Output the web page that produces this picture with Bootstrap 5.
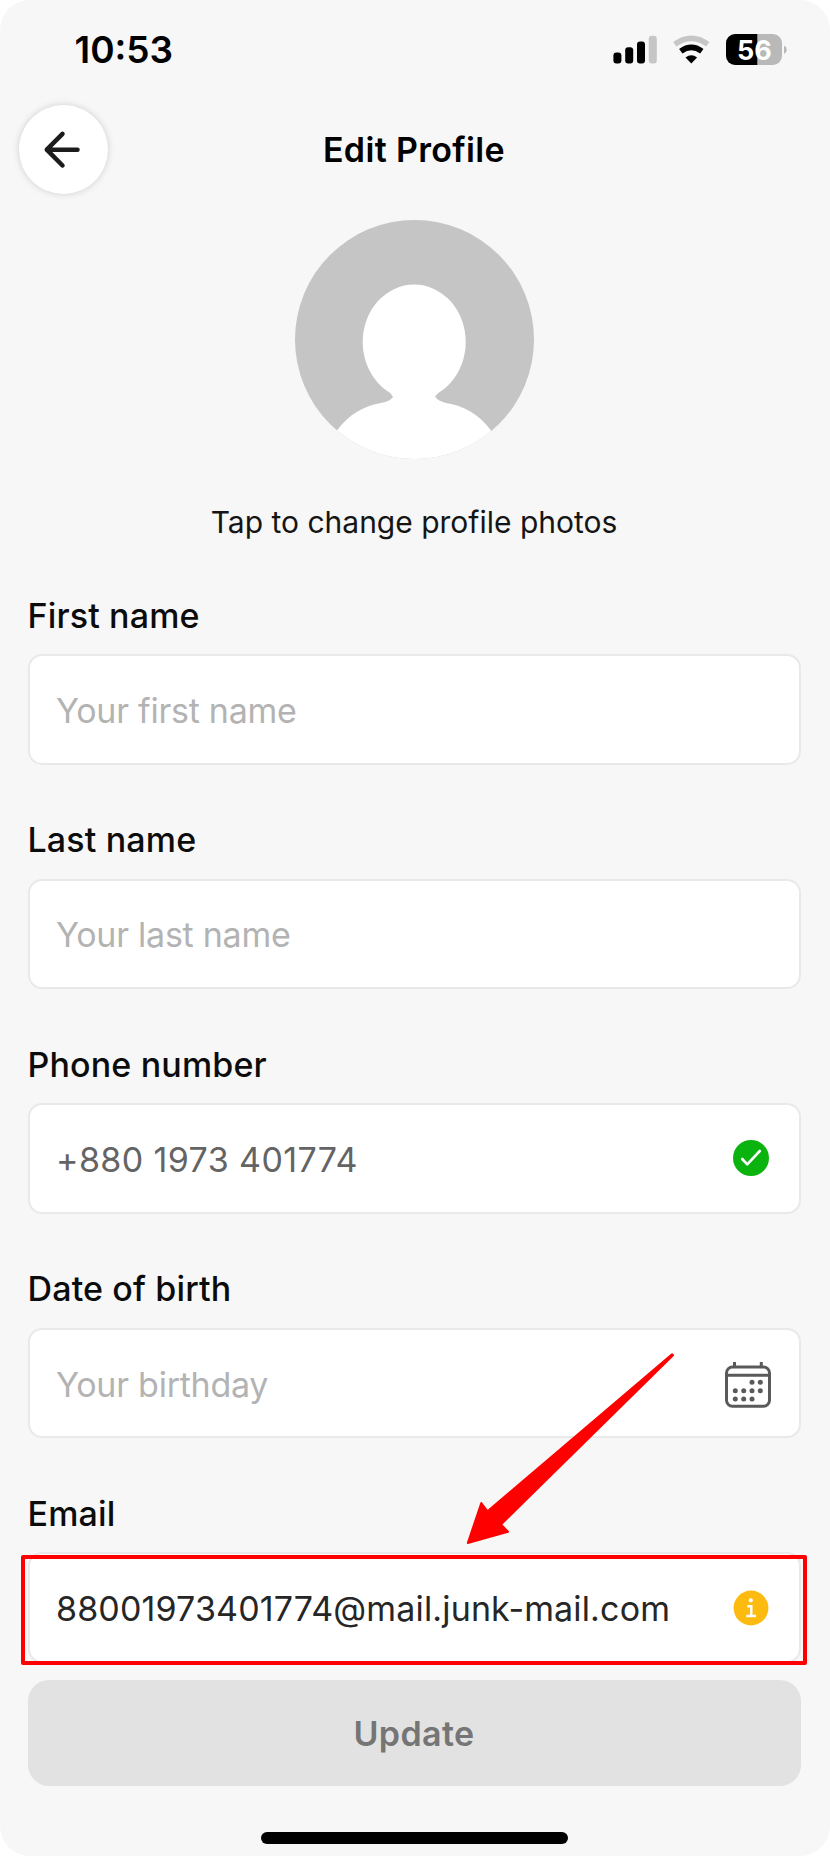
<!DOCTYPE html>
<html lang="en">
<head>
<meta charset="utf-8">
<meta name="viewport" content="width=device-width, initial-scale=1">
<title>Edit Profile</title>
<link href="https://cdn.jsdelivr.net/npm/bootstrap@5.3.0/dist/css/bootstrap.min.css" rel="stylesheet">
<style>
body{background:#fff;font-family:Inter,"Liberation Sans",sans-serif;color:#0c0c0c}
.screen{width:830px;height:1856px;background:#f7f7f7;border-radius:30px;padding:0 29.5px 0 27.5px}
.status{height:100px;padding:0 10.5px 0 47px}
.clock{font-size:37px;font-weight:600;line-height:40px;color:#000}
.topbar{height:99px}
.back{width:89px;height:89px;left:-9px;top:5px;border:0;padding:0;background:#fff;box-shadow:0 0 7px rgba(0,0,0,.17)}
.title{font-size:34px;font-weight:600;line-height:40px;letter-spacing:.35px;color:#000}
.avatar{margin-top:20.5px}
.caption{font-size:30px;line-height:40px;margin-top:43px;color:#151515}
.fields{margin-top:54px;gap:55.6px}
.field-label{font-size:34px;font-weight:500;line-height:40px;letter-spacing:.15px;margin-bottom:18.5px}
.box{height:110.5px;border:2.5px solid #e9e9e9;border-radius:14px;background:#fff;padding:0 30px 0 26.5px}
.box input{font-size:34px;line-height:44px;height:46px;border:0;background:none;outline:0;padding:2px 0 0;min-width:0;letter-spacing:.4px;color:#646464}
.box input::placeholder{color:#b3b3b3;opacity:1;letter-spacing:-.25px}
.box input.filled{color:#262626;letter-spacing:.15px}
.calendar{margin:4px -2.7px 0 0}
.update{height:105.5px;margin-top:17.6px;border-radius:21px;border:0;background:#e2e2e2;font-size:34px;font-weight:600;letter-spacing:.4px}
.update:disabled{background:#e2e2e2;color:#757575;opacity:1}
.homebar{width:307px;height:12px;border-radius:6px;background:#000;margin-top:46px}
.highlight{left:-6.5px;top:61px;width:786px;height:110px;border:4px solid #f00;border-radius:2px}
.pointer{left:432.5px;top:-149px}
</style>
</head>
<body>
<main class="screen d-flex flex-column">
  <div class="status d-flex align-items-center justify-content-between">
    <span class="clock">10:53</span>
    <svg width="180" height="40" viewBox="0 0 180 40" role="img" aria-label="Signal, Wi-Fi, battery">
      <rect x="3.400" y="22.500" width="8" height="11" rx="3"/>
      <rect x="15.200" y="17.300" width="8" height="16.200" rx="3"/>
      <rect x="27" y="11.500" width="8" height="22" rx="3"/>
      <rect x="38.800" y="5.700" width="8" height="27.800" rx="3" fill="#c6c6c6"/>
      <path d="M64.800 14.300Q81.300 2.500 97.800 14.300" fill="none" stroke="#c6c6c6" stroke-width="5.500"/>
      <path d="M70.800 21.300Q81.300 13.600 91.800 21.300" fill="none" stroke="#000" stroke-width="5.700"/>
      <path d="M75.500 27.500Q81.300 23 87.100 27.500L81.300 33.500Z"/>
      <path d="M125 4H147.700V35H125A9 9 0 0 1 116 26V13A9 9 0 0 1 125 4Z"/>
      <path d="M147.500 4H163A9 9 0 0 1 172 13V26A9 9 0 0 1 163 35H147.500Z" fill="#b9b9b9"/>
      <path d="M174 15.500Q176.800 17 176.800 19.700T174 24Z" fill="#b9b9b9"/>
      <text x="144.300" y="29.700" text-anchor="middle" font-size="27" font-weight="700" fill="#fff">56</text>
    </svg>
  </div>
  <header class="topbar position-relative d-flex align-items-center justify-content-center">
    <button class="back position-absolute rounded-circle" aria-label="Back">
      <svg class="d-block" width="89" height="89" viewBox="0 0 89 89" fill="none" stroke="#1c1c1c" stroke-width="4.500" stroke-linecap="round" stroke-linejoin="round"><path d="M43.500 28.800L27.800 44.700L43.500 60.500M27.800 44.700H58.500"/></svg>
    </button>
    <h1 class="title m-0">Edit Profile</h1>
  </header>
  <svg class="avatar mx-auto flex-shrink-0" width="239" height="239" viewBox="0 0 239 239" role="img" aria-label="Profile photo">
    <defs><clipPath id="disc"><circle cx="119.500" cy="119.500" r="119.500"/></clipPath></defs>
    <g clip-path="url(#disc)">
      <rect width="239" height="239" fill="#c5c5c5"/>
      <ellipse cx="119.200" cy="122" rx="51.500" ry="57.500" fill="#fff"/>
      <path d="M94 171L98 177Q95 181.500 86 183C69 186 54 194 42 210.500V239H196V210.500C184 194 168 185.500 151 183Q143 181 140 176.500L145 171Z" fill="#fff"/>
    </g>
  </svg>
  <p class="caption text-center mb-0">Tap to change profile photos</p>
  <form class="fields d-flex flex-column">
    <div>
      <label class="field-label d-block" for="first">First name</label>
      <div class="box d-flex align-items-center"><input class="flex-grow-1" id="first" placeholder="Your first name"></div>
    </div>
    <div>
      <label class="field-label d-block" for="last">Last name</label>
      <div class="box d-flex align-items-center"><input class="flex-grow-1" id="last" placeholder="Your last name"></div>
    </div>
    <div>
      <label class="field-label d-block" for="phone">Phone number</label>
      <div class="box d-flex align-items-center">
        <input class="flex-grow-1" id="phone" value="+880 1973 401774">
        <svg width="36" height="36" viewBox="0 0 36 36"><circle cx="18" cy="18" r="18" fill="#0bb30f"/><path d="M9.200 19L14.200 24.400L26.800 11" fill="none" stroke="#fff" stroke-width="2.600" stroke-linecap="round" stroke-linejoin="round"/></svg>
      </div>
    </div>
    <div>
      <label class="field-label d-block" for="birth">Date of birth</label>
      <div class="box d-flex align-items-center">
        <input class="flex-grow-1" id="birth" placeholder="Your birthday">
        <svg class="calendar" width="46" height="46" viewBox="0 0 46 46" fill="none" stroke="#5a5a5a" stroke-width="3">
          <rect x="1.500" y="5" width="43" height="39.200" rx="6"/><path d="M2 13.300H44M9.500 0V5M36.300 0V5"/>
          <g fill="#5a5a5a" stroke="none"><circle cx="27" cy="20.300" r="2.500"/><circle cx="35.300" cy="20.300" r="2.500"/><circle cx="10.300" cy="28.700" r="2.500"/><circle cx="18.700" cy="28.700" r="2.500"/><circle cx="27" cy="28.700" r="2.500"/><circle cx="35.300" cy="28.700" r="2.500"/><circle cx="10.300" cy="37" r="2.500"/><circle cx="18.700" cy="37" r="2.500"/><circle cx="27" cy="37" r="2.500"/></g>
        </svg>
      </div>
    </div>
    <div class="position-relative">
      <label class="field-label d-block" for="email">Email</label>
      <div class="box d-flex align-items-center">
        <input class="filled flex-grow-1" id="email" value="88001973401774@mail.junk-mail.com">
        <svg width="36" height="36" viewBox="0 0 36 36"><circle cx="18" cy="18" r="17.400" fill="#fdbb10"/><circle cx="17.800" cy="10.300" r="2.100" fill="#fff"/><path d="M14.300 16.300H18.300V26M13.300 26H23" fill="none" stroke="#fff" stroke-width="2.400"/></svg>
      </div>
      <div class="highlight position-absolute"></div>
      <svg class="pointer position-absolute" width="220" height="205" viewBox="0 0 220 205"><path d="M7.800 198L21.300 158L27.500 166.300L212 9.300L213 10.300Q120 102 41 179.500L48 186.800Z" fill="#f00" stroke="#f00" stroke-width="2" stroke-linejoin="round"/></svg>
    </div>
  </form>
  <button class="update btn w-100 flex-shrink-0" disabled>Update</button>
  <div class="homebar mx-auto flex-shrink-0"></div>
</main>
<script src="https://cdn.jsdelivr.net/npm/bootstrap@5.3.0/dist/js/bootstrap.bundle.min.js"></script>
</body>
</html>
